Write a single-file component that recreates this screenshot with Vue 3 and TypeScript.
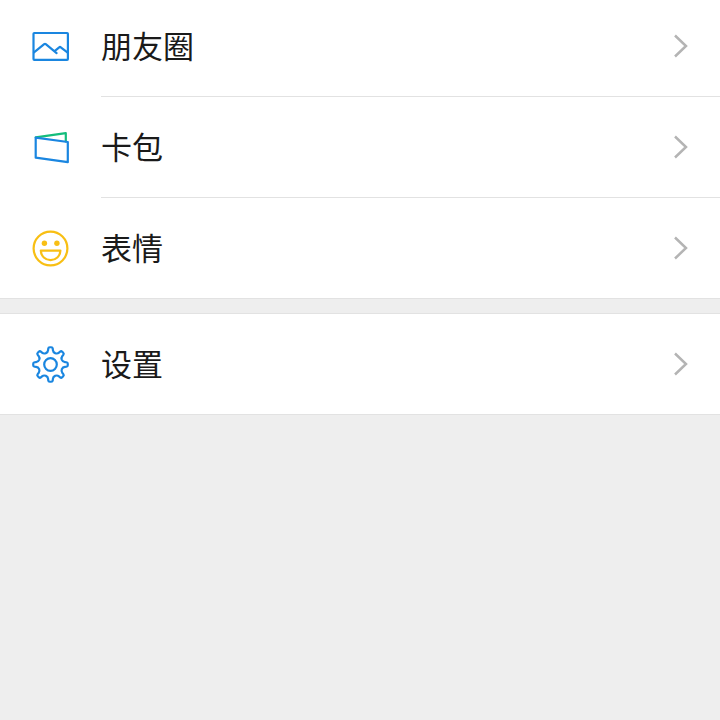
<script setup lang="ts">
type IconName = 'moments' | 'cards' | 'stickers' | 'settings'

interface MenuItem {
  icon: IconName
  label: string
}

const groups: MenuItem[][] = [
  [
    { icon: 'moments', label: '朋友圈' },
    { icon: 'cards', label: '卡包' },
    { icon: 'stickers', label: '表情' },
  ],
  [{ icon: 'settings', label: '设置' }],
]

// Builds the outline of an eight-tooth gear with rounded corners.
function gearPath(cx: number, cy: number): string {
  const corners: [number, number][] = []
  for (let tooth = 0; tooth < 8; tooth++) {
    const mid = tooth * 45 - 90
    const profile: [number, number][] = [
      [-12, 12.5],
      [-7, 17.4],
      [7, 17.4],
      [12, 12.5],
    ]
    for (const [offset, radius] of profile) {
      const angle = ((mid + offset) * Math.PI) / 180
      corners.push([cx + radius * Math.cos(angle), cy + radius * Math.sin(angle)])
    }
  }
  const towards = (from: [number, number], to: [number, number], distance: number) => {
    const length = Math.hypot(to[0] - from[0], to[1] - from[1])
    const t = distance / length
    return `${(from[0] + (to[0] - from[0]) * t).toFixed(2)} ${(from[1] + (to[1] - from[1]) * t).toFixed(2)}`
  }
  const parts = corners.map((corner, i) => {
    const previous = corners[(i + corners.length - 1) % corners.length]
    const next = corners[(i + 1) % corners.length]
    const outer = i % 4 === 1 || i % 4 === 2
    const rounding = outer ? 1.4 : 2.2
    return `${i ? 'L' : 'M'}${towards(corner, previous, rounding)}Q${corner[0].toFixed(2)} ${corner[1].toFixed(2)} ${towards(corner, next, rounding)}`
  })
  return parts.join('') + 'Z'
}

const gear = gearPath(20.5, 20.5)
</script>

<template>
  <nav class="menu">
    <ul v-for="(group, index) in groups" :key="index" class="group">
      <li v-for="item in group" :key="item.icon" class="entry">
        <a class="link" href="#">
          <svg class="icon" viewBox="0 0 40 40" aria-hidden="true">
            <g v-if="item.icon === 'moments'" class="blue">
              <rect x="3.5" y="7" width="34.4" height="26.9" rx="0.8" />
              <path d="M4 26.3 14.2 18.2Q15 17.6 15.8 18.2L26.6 27.1M24.3 25.3 29.2 21.3Q30 20.7 30.8 21.3L37.7 26.7" />
            </g>
            <g v-else-if="item.icon === 'cards'">
              <path class="green" d="M5.7 10.4 35.8 6.2V14.4" />
              <path class="blue" d="M5.7 10.6 37.8 15V35.2L5.7 30.7Z" />
            </g>
            <g v-else-if="item.icon === 'stickers'" class="yellow">
              <circle cx="20.5" cy="20.5" r="16.9" />
              <circle class="eye" cx="14.4" cy="15.3" r="2.7" />
              <circle class="eye" cx="26.9" cy="15.3" r="2.7" />
              <path d="M10.8 22.6H30.4C30 28.4 26 32.1 20.6 32.1S11.2 28.4 10.8 22.6Z" />
            </g>
            <g v-else class="blue">
              <path :d="gear" />
              <circle cx="20.5" cy="20.5" r="6.3" />
            </g>
          </svg>
          <span class="label">{{ item.label }}</span>
          <svg class="chevron" viewBox="0 0 16 24" aria-hidden="true">
            <path d="M3 1.5 14 12 3 22.5" />
          </svg>
        </a>
      </li>
    </ul>
  </nav>
</template>

<style>
body {
  background: #eeeeee;
}
</style>

<style scoped>
.menu {
  display: flex;
  flex-direction: column;
  gap: 14px;
  margin-top: -5px;
  font-family: "Noto Sans CJK SC", sans-serif;
}

.group {
  margin: 0;
  padding: 0;
  list-style: none;
  background: #ffffff;
  border-top: 1px solid #e2e2e2;
  border-bottom: 1px solid #e2e2e2;
}

.link {
  display: flex;
  align-items: center;
  height: 100px;
  padding: 0 32px 0 30px;
  color: #1a1a1a;
  text-decoration: none;
}

.entry + .entry::before {
  content: "";
  display: block;
  height: 1px;
  margin-left: 101px;
  background: #e2e2e2;
}

.icon {
  flex: none;
  width: 40px;
  height: 40px;
  margin-right: 31px;
  fill: none;
  stroke-width: 2.2;
  stroke-linecap: round;
  stroke-linejoin: round;
}

.blue {
  stroke: #1a86e0;
}

.green {
  stroke: #14bd7c;
}

.yellow {
  stroke: #f8bf14;
}

.eye {
  fill: #f8bf14;
  stroke: none;
}

.label {
  flex: 1;
  padding-bottom: 2px;
  font-size: 31px;
  line-height: 46px;
}

.chevron {
  flex: none;
  width: 16px;
  height: 24px;
  fill: none;
  stroke: #b4b4b4;
  stroke-width: 2.5;
}
</style>
